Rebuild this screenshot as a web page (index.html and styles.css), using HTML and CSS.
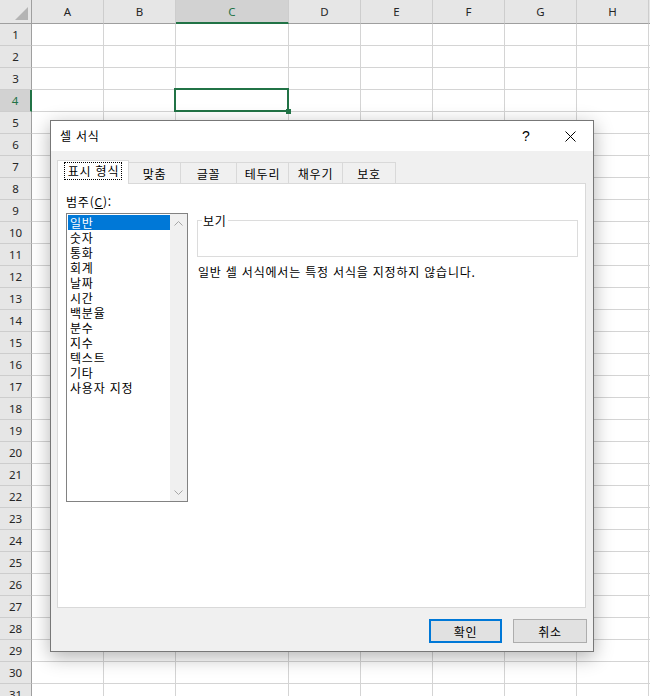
FILE: index.html
```html
<!DOCTYPE html>
<html lang="ko">
<head>
	<meta charset="UTF-8">
	<title>셀 서식</title>
	<link rel="stylesheet" href="styles.css">
</head>
<body>
	<div id="sheet" class="sheet"></div>

	<div class="dialog">
		<div class="titlebar">
			<span class="title">셀 서식</span>
			<span class="help">?</span>
			<span class="close">
				<svg width="11" height="11" viewBox="0 0 11 11"><path d="M0.5 0.5L10.5 10.5M10.5 0.5L0.5 10.5" stroke="#000" stroke-width="1" fill="none"/></svg>
			</span>
		</div>
		<div class="body">
			<ul class="tabs">
				<li class="act t1"><span>표시 형식</span></li>
				<li class="t2">맞춤</li>
				<li class="t3">글꼴</li>
				<li class="t4">테두리</li>
				<li class="t5">채우기</li>
				<li class="t6">보호</li>
			</ul>
			<div class="panel">
				<div class="cat">
					<div class="label">범주(<u>C</u>):</div>
					<div class="listbox">
						<ul class="items">
							<li class="sel">일반</li>
							<li>숫자</li>
							<li>통화</li>
							<li>회계</li>
							<li>날짜</li>
							<li>시간</li>
							<li>백분율</li>
							<li>분수</li>
							<li>지수</li>
							<li>텍스트</li>
							<li>기타</li>
							<li>사용자 지정</li>
						</ul>
						<div class="scroll">
							<svg width="9" height="5" viewBox="0 0 9 5"><path d="M0.5 4.5L4.5 0.5L8.5 4.5" stroke="#a6a6a6" fill="none"/></svg>
							<svg width="9" height="5" viewBox="0 0 9 5"><path d="M0.5 0.5L4.5 4.5L8.5 0.5" stroke="#a6a6a6" fill="none"/></svg>
						</div>
					</div>
				</div>
				<div class="side">
					<div class="preview"><span class="legend">보기</span></div>
					<p class="desc">일반 셀 서식에서는 특정 서식을 지정하지 않습니다.</p>
				</div>
			</div>
			<div class="buttons">
				<button class="ok">확인</button>
				<button>취소</button>
			</div>
		</div>
	</div>

	<script src="sheet.js"></script>
</body>
</html>
```

FILE: styles.css
```css
body{
	margin: 0;
	overflow: hidden;
	background: #fff;
	font-family: "Noto Sans CJK KR", sans-serif;
	font-size: 12px;
	color: #000;
}
ul{
	list-style: none;
	margin: 0;
	padding: 0;
}

/* sheet */
.sheet{
	display: grid;
	grid-template-columns: 32px 72px 72px 113px repeat(5, 72px) 40px;
	grid-template-rows: 24px;
	grid-auto-rows: 22px;
	font-family: "Noto Sans", sans-serif;
	font-size: 11.5px;
	color: #262626;
}
.sheet div{
	box-sizing: border-box;
}
.corner{
	display: flex;
	justify-content: flex-end;
	align-items: flex-end;
	padding: 3px;
	background: #e6e6e6;
	border-right: 1px solid #9f9f9f;
	border-bottom: 1px solid #9f9f9f;
}
.corner::after{
	content: '';
	border-left: 13px solid transparent;
	border-bottom: 13px solid #b4b4b4;
}
.ch, .rh{
	display: flex;
	align-items: center;
	justify-content: center;
	background: #e6e6e6;
}
.ch{
	border-right: 1px solid #cdcdcd;
	border-bottom: 1px solid #9f9f9f;
}
.ch.act{
	background: #d2d2d2;
	border-bottom: 2px solid #217346;
	color: #217346;
}
.rh{
	border-right: 1px solid #9f9f9f;
	border-bottom: 1px solid #cdcdcd;
}
.rh.act{
	background: #d2d2d2;
	border-right: 2px solid #217346;
	color: #217346;
}
.cell{
	border-right: 1px solid #d4d4d4;
	border-bottom: 1px solid #d4d4d4;
}
.cell.sel{
	position: relative;
}
.cell.sel::after{
	content: '';
	position: absolute;
	left: -2px;
	top: -2px;
	right: -1px;
	bottom: -1px;
	border: 2px solid #217346;
}
.cell.sel::before{
	content: '';
	position: absolute;
	right: -3px;
	bottom: -3px;
	width: 5px;
	height: 5px;
	background: #217346;
	z-index: 1;
}

/* dialog */
.dialog{
	position: absolute;
	left: 50px;
	top: 120px;
	width: 544px;
	height: 532px;
	box-sizing: border-box;
	border: 1px solid #777;
	background: #f0f0f0;
	box-shadow: 0 5px 18px rgba(0,0,0,.3);
	letter-spacing: .8px;
}
.titlebar{
	display: flex;
	align-items: center;
	height: 30px;
	padding-left: 9px;
	background: #fff;
}
.title{
	flex: 1;
	margin-top: -2px;
}
.help{
	width: 20px;
	text-align: center;
	font-family: "Liberation Sans", sans-serif;
	font-size: 14px;
	letter-spacing: 0;
}
.close{
	display: flex;
	justify-content: center;
	width: 46px;
	margin-left: 11px;
}
.body{
	padding: 9px 7px 0 6px;
}
.tabs{
	display: flex;
	align-items: flex-end;
	height: 23px;
}
.tabs li{
	box-sizing: border-box;
	height: 21px;
	margin-left: -1px;
	display: flex;
	align-items: center;
	justify-content: center;
	border: 1px solid #d9d9d9;
	border-bottom: 0;
	background: #f0f0f0;
}
.tabs .act{
	position: relative;
	z-index: 1;
	height: 24px;
	margin: 0 0 -1px 0;
	align-items: flex-start;
	padding-top: 1px;
	background: #fff;
}
.tabs .act span{
	border: 1px dotted #000;
	padding: 0 2px 0 3px;
	line-height: 16px;
}
.t1{ width: 72px; }
.t2{ width: 53px; }
.t3{ width: 57px; }
.t4{ width: 53px; }
.t5{ width: 55px; }
.t6{ width: 54px; }

.panel{
	display: flex;
	height: 425px;
	box-sizing: border-box;
	padding: 10px 7px 0 8px;
	border: 1px solid #d9d9d9;
	background: #fff;
}
.cat{
	width: 122px;
}
.label{
	line-height: 15px;
	margin-bottom: 4px;
}
.listbox{
	display: flex;
	height: 289px;
	box-sizing: border-box;
	border: 1px solid #828282;
}
.items{
	flex: 1;
	padding: 1px 0 0 1px;
}
.items li{
	line-height: 15px;
	padding-left: 2px;
}
.items .sel{
	background: #0078d7;
	color: #fff;
}
.scroll{
	display: flex;
	flex-direction: column;
	justify-content: space-between;
	align-items: center;
	width: 17px;
	padding: 7px 0 6px;
	box-sizing: border-box;
	background: #f0f0f0;
}
.side{
	flex: 1;
	margin-left: 9px;
	padding-top: 26px;
}
.preview{
	position: relative;
	height: 37px;
	box-sizing: border-box;
	border: 1px solid #dcdcdc;
}
.legend{
	position: absolute;
	left: 4px;
	top: -8px;
	padding: 0 1px;
	line-height: 15px;
	background: #fff;
}
.desc{
	margin: 7px 0 0 1px;
	line-height: 15px;
}
.buttons{
	display: flex;
	justify-content: flex-end;
	gap: 11px;
	margin: 11px -1px 0 0;
}
.buttons button{
	width: 74px;
	height: 24px;
	padding: 0;
	font: inherit;
	letter-spacing: .8px;
	color: #000;
	background: #e1e1e1;
	border: 1px solid #adadad;
}
.buttons .ok{
	width: 73px;
	border: 2px solid #0078d7;
}
```

FILE: sheet.js
```js
var sheet=document.getElementById('sheet');
var cols=['A','B','C','D','E','F','G','H',''];
var html='<div class="corner"></div>';
for(var i=0;i<cols.length;i++){
	html+='<div class="ch'+(cols[i]=='C'?' act':'')+'">'+cols[i]+'</div>';
}
for(var r=1;r<=31;r++){
	html+='<div class="rh'+(r==4?' act':'')+'">'+r+'</div>';
	for(var c=0;c<cols.length;c++){
		html+='<div class="cell'+(r==4&&c==2?' sel':'')+'"></div>';
	}
}
sheet.innerHTML=html;
```
